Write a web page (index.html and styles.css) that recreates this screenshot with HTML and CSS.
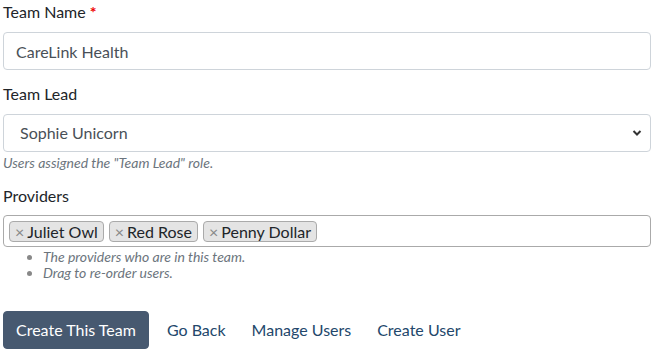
FILE: index.html
```html
<!DOCTYPE html>
<html lang="en">
<head>
    <meta charset="UTF-8">
    <meta name="viewport" content="width=device-width, initial-scale=1.0">
    <title>Create Team</title>
    <link rel="stylesheet" href="styles.css">
</head>
<body>
    <form class="team-form">
        <div class="form-group">
            <label for="teamName">Team Name <span class="required">*</span></label>
            <input type="text" id="teamName" class="form-control" value="CareLink Health">
        </div>

        <div class="form-group">
            <label for="teamLead">Team Lead</label>
            <div class="select-wrap">
                <select id="teamLead" class="form-control">
                    <option>Sophie Unicorn</option>
                </select>
                <svg class="select-arrow" width="10" height="8" viewBox="0 0 10 8">
                    <path d="M1.5 2 L5 5.5 L8.5 2" fill="none" stroke="#333" stroke-width="2"/>
                </svg>
            </div>
            <small class="help">Users assigned the "Team Lead" role.</small>
        </div>

        <div class="form-group providers">
            <label>Providers</label>
            <div class="tag-box">
                <span class="tag"><span class="tag-x">×</span>Juliet Owl</span>
                <span class="tag"><span class="tag-x">×</span>Red Rose</span>
                <span class="tag"><span class="tag-x">×</span>Penny Dollar</span>
            </div>
            <ul class="help-list">
                <li>The providers who are in this team.</li>
                <li>Drag to re-order users.</li>
            </ul>
        </div>

        <div class="actions">
            <button type="button" class="btn-primary">Create This Team</button>
            <a href="#" class="btn-link">Go Back</a>
            <a href="#" class="btn-link">Manage Users</a>
            <a href="#" class="btn-link">Create User</a>
        </div>
    </form>
</body>
</html>
```

FILE: styles.css
```css
body {
    margin: 0;
    font-family: Lato, "Open Sans", Arial, sans-serif;
    font-size: 16px;
    line-height: 24px;
    color: #212529;
    background-color: #fff;
}
.team-form {
    padding: 0 4px 0 3px;
}
label {
    display: block;
    margin-bottom: 8px;
}
.required {
    color: #e00;
    font-weight: bold;
}
.form-group {
    margin-bottom: 12px;
}
.form-control {
    display: block;
    width: 100%;
    height: 38px;
    box-sizing: border-box;
    padding: 6px 12px;
    font: inherit;
    color: #495057;
    background-color: #fff;
    border: 1px solid #ced4da;
    border-radius: 4px;
}
select.form-control {
    appearance: none;
    -webkit-appearance: none;
    padding-left: 16px;
}
.select-wrap {
    position: relative;
}
.select-arrow {
    position: absolute;
    right: 9px;
    top: 15px;
}
.help {
    display: block;
    margin-top: 2px;
    font-size: 14px;
    line-height: 18px;
    font-style: italic;
    color: #6c757d;
}
.providers label {
    margin-bottom: 7px;
}
.tag-box {
    display: flex;
    gap: 5px;
    height: 32px;
    box-sizing: border-box;
    padding: 5px 5px;
    border: 1px solid #aaa;
    border-radius: 4px;
}
.tag {
    display: inline-flex;
    align-items: center;
    height: 21px;
    box-sizing: border-box;
    padding: 0 5px 0 5px;
    background-color: #e4e4e4;
    border: 1px solid #aaa;
    border-radius: 4px;
    line-height: 19px;
    font-size: 16px;
}
.tag-x {
    color: #888;
    font-size: 16px;
    margin-right: 3px;
}
.help-list {
    margin: 2px 0 0;
    padding-left: 40px;
    font-size: 14px;
    line-height: 16px;
    font-style: italic;
    color: #6c757d;
}
.help-list li::marker {
    color: #888;
}
.actions {
    display: flex;
    align-items: center;
    gap: 2px;
    margin-top: 30px;
}
.btn-primary {
    height: 38px;
    margin-right: 4px;
    padding: 6px 12px;
    font: inherit;
    color: #fff;
    background-color: #475970;
    border: 1px solid #475970;
    border-radius: 4px;
    cursor: pointer;
}
.btn-link {
    padding: 6px 12px;
    color: #23476b;
    text-decoration: none;
}
```
